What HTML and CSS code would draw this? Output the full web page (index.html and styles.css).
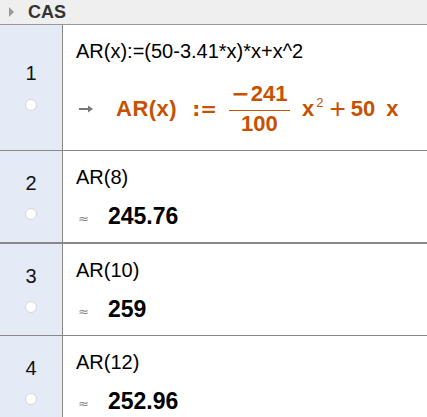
FILE: index.html
```html
<!DOCTYPE html>
<html lang="en">
<head>
    <meta charset="UTF-8">
    <meta name="viewport" content="width=device-width, initial-scale=1.0">
    <title>CAS</title>
    <link rel="stylesheet" href="styles.css">
</head>
<body>

<div class="cas">
    <div class="cas-header">
        <span class="toggle"></span>
        <span class="title">CAS</span>
    </div>

    <div class="cas-row row-first">
        <div class="row-label">
            <span class="row-num">1</span>
            <span class="marble"></span>
        </div>
        <div class="row-body">
            <div class="cas-input">AR(x):=(50-3.41*x)*x+x^2</div>
            <div class="cas-output math">
                <span class="arrow">
                    <svg width="15" height="10" viewBox="0 0 15 10">
                        <path d="M0 5 H12" stroke="#777" stroke-width="2"/>
                        <path d="M9 1.5 L14 5 L9 8.5 Z" fill="#777"/>
                    </svg>
                </span>
                <span class="m-def">AR(x)</span>
                <span class="m-assign">:=</span>
                <span class="frac">
                    <span class="frac-num"><span class="minus">&minus;</span>241</span>
                    <span class="frac-den">100</span>
                </span>
                <span class="m-pow">x<sup>2</sup></span>
                <span class="m-plus">+</span>
                <span class="m-term">50</span>
                <span class="m-var">x</span>
            </div>
        </div>
    </div>

    <div class="cas-row row-thick">
        <div class="row-label">
            <span class="row-num">2</span>
            <span class="marble"></span>
        </div>
        <div class="row-body">
            <div class="cas-input">AR(8)</div>
            <div class="cas-output">
                <span class="approx">&asymp;</span>
                <span class="out-value">245.76</span>
            </div>
        </div>
    </div>

    <div class="cas-row">
        <div class="row-label">
            <span class="row-num">3</span>
            <span class="marble"></span>
        </div>
        <div class="row-body">
            <div class="cas-input">AR(10)</div>
            <div class="cas-output">
                <span class="approx">&asymp;</span>
                <span class="out-value">259</span>
            </div>
        </div>
    </div>

    <div class="cas-row">
        <div class="row-label">
            <span class="row-num">4</span>
            <span class="marble"></span>
        </div>
        <div class="row-body">
            <div class="cas-input">AR(12)</div>
            <div class="cas-output">
                <span class="approx">&asymp;</span>
                <span class="out-value">252.96</span>
            </div>
        </div>
    </div>
</div>

</body>
</html>
```

FILE: styles.css
```css
/* General */
body {
    margin: 0;
    font-family: "Liberation Sans", Arial, sans-serif;
    background: #fff;
    color: #000;
}

.cas {
    width: 427px;
    height: 417px;
    overflow: hidden;
}

/* Header */
.cas-header {
    height: 24px;
    background-color: #efefef;
    border-bottom: 1px solid #999;
    display: flex;
    align-items: center;
    padding-left: 9px;
}

.toggle {
    width: 0;
    height: 0;
    border-left: 5px solid #999;
    border-top: 5px solid transparent;
    border-bottom: 5px solid transparent;
    margin-right: 14px;
}

.title {
    font-size: 18px;
    font-weight: bold;
    color: #333;
}

/* Rows */
.cas-row {
    display: flex;
    border-bottom: 1px solid #888;
}

.row-thick {
    border-bottom-width: 2px;
}

.row-label {
    width: 62px;
    background-color: #e5ebf6;
    border-right: 1px solid #888;
    display: flex;
    flex-direction: column;
    align-items: center;
    padding-top: 20px;
}

.row-first .row-label {
    padding-top: 36px;
}

.row-num {
    font-size: 20px;
    line-height: 24px;
    color: #111;
}

.marble {
    width: 10px;
    height: 10px;
    margin-top: 13px;
    border-radius: 50%;
    background: #fff;
    border: 1px solid #d4d4d4;
}

.row-first .marble {
    margin-top: 14px;
}

.row-body {
    flex: 1;
    padding: 14px 0 13px 13px;
}

.row-first .row-body {
    padding-bottom: 14px;
}

.cas-input {
    font-size: 20px;
    line-height: 24px;
}

.cas-output {
    display: flex;
    align-items: center;
    margin-top: 14px;
    height: 26px;
}

.approx {
    color: #888;
    font-family: "DejaVu Sans", sans-serif;
    font-size: 13px;
    margin-left: 2px;
    width: 30px;
    padding-top: 4px;
}

.out-value {
    font-size: 23px;
    font-weight: bold;
}

/* Symbolic output */
.math {
    height: auto;
    margin-top: 19px;
    color: #c65100;
    font-weight: bold;
    font-size: 22px;
}

.arrow {
    display: flex;
    margin-left: 3px;
    width: 37px;
}

.m-def {
    letter-spacing: 0.5px;
    margin-right: 15px;
}

.m-assign {
    font-family: "DejaVu Sans", sans-serif;
    font-size: 20px;
    margin-right: 12px;
}

.frac {
    display: inline-flex;
    flex-direction: column;
    align-items: center;
    width: 61px;
    margin-right: 12px;
}

.frac-num {
    line-height: 24px;
    padding-bottom: 4px;
    border-bottom: 1px solid #c65100;
    width: 100%;
    text-align: center;
}

.minus {
    font-family: "DejaVu Sans", sans-serif;
    margin-right: 1px;
}

.frac-den {
    line-height: 24px;
    margin-top: 1px;
}

.m-pow sup {
    font-size: 13px;
    font-weight: normal;
    vertical-align: 9px;
    line-height: 0;
    margin-left: 2px;
}

.m-plus {
    font-weight: normal;
    font-size: 28px;
    margin: 0 5px 0 6px;
}

.m-term {
    margin-right: 11px;
}
```
